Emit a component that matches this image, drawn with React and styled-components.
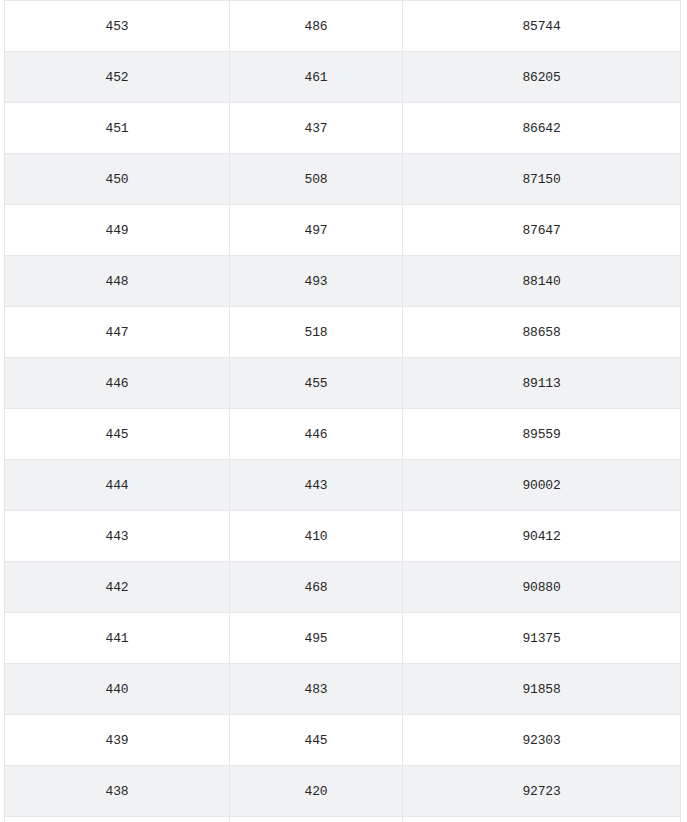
import React from "react";
import styled, { createGlobalStyle } from "styled-components";

const Global = createGlobalStyle`
  html, body { margin: 0; padding: 0; background: #fff; }
  body { font-family: "Liberation Mono", "DejaVu Sans Mono", monospace; }
`;

const Wrap = styled.div`
  padding: 0 6px 0 4px;
`;

const Table = styled.table`
  width: 677px;
  border-collapse: collapse;
  table-layout: fixed;
  border-left: 1px solid #e6e7eb;
  border-right: 1px solid #e6e7eb;
`;

const Row = styled.tr`
  background: ${(p) => (p.$striped ? "#f1f2f4" : "#ffffff")};
`;

const Cell = styled.td`
  height: 50px;
  padding: 0;
  border: 1px solid #e6e7eb;
  text-align: center;
  vertical-align: middle;
  font-size: 13px;
  color: #262626;
  letter-spacing: -0.2px;
`;

const rows = [
  [453, 486, 85744],
  [452, 461, 86205],
  [451, 437, 86642],
  [450, 508, 87150],
  [449, 497, 87647],
  [448, 493, 88140],
  [447, 518, 88658],
  [446, 455, 89113],
  [445, 446, 89559],
  [444, 443, 90002],
  [443, 410, 90412],
  [442, 468, 90880],
  [441, 495, 91375],
  [440, 483, 91858],
  [439, 445, 92303],
  [438, 420, 92723],
  [437, 431, 93154],
];

export default function App() {
  return (
    <>
      <Global />
      <Wrap>
        <Table>
          <colgroup>
            <col style={{ width: "225px" }} />
            <col style={{ width: "173px" }} />
            <col />
          </colgroup>
          <tbody>
            {rows.map((r, i) => (
              <Row key={i} $striped={i % 2 === 1}>
                {r.map((v, j) => (
                  <Cell key={j}>{v}</Cell>
                ))}
              </Row>
            ))}
          </tbody>
        </Table>
      </Wrap>
    </>
  );
}
